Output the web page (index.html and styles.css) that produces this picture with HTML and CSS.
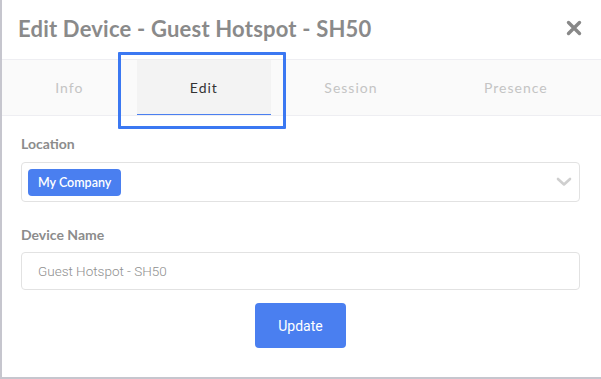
FILE: index.html
```html
<!DOCTYPE html>
<html lang="en">
<head>
    <meta charset="UTF-8">
    <meta name="viewport" content="width=device-width, initial-scale=1.0">
    <title>Edit Device</title>
    <link rel="stylesheet" href="styles.css">
</head>
<body>
    <div class="modal">
        <div class="modalHeader">
            <h2 class="modalTitle">Edit Device - Guest Hotspot - SH50</h2>
            <button class="closeBtn" aria-label="Close">
                <svg width="16" height="16" viewBox="0 0 16 16">
                    <path d="M2.5 2.5 L13.5 13.5 M13.5 2.5 L2.5 13.5" stroke="#888" stroke-width="3.4" stroke-linecap="round"/>
                </svg>
            </button>
        </div>

        <div class="tabs">
            <div class="tab">Info</div>
            <div class="tab active">Edit</div>
            <div class="tab">Session</div>
            <div class="tab">Presence</div>
            <div class="highlight"></div>
        </div>

        <div class="modalBody">
            <label class="fieldLabel">Location</label>
            <div class="select">
                <span class="chip">My Company</span>
                <svg class="chevron" width="16" height="10" viewBox="0 0 16 10">
                    <path d="M2 2 L8 7.5 L14 2" fill="none" stroke="#cfcfcf" stroke-width="2.6" stroke-linecap="round" stroke-linejoin="round"/>
                </svg>
            </div>

            <label class="fieldLabel second">Device Name</label>
            <input class="textInput" type="text" value="Guest Hotspot - SH50">

            <div class="actions">
                <button class="updateBtn">Update</button>
            </div>
        </div>
    </div>
</body>
</html>
```

FILE: styles.css
```css
body {
    margin: 0;
    background: #fff;
    font-family: Lato, "Noto Sans", sans-serif;
}

.modal {
    width: 599px;
    height: 377px;
    border-left: 2px solid #c6c6ce;
    border-bottom: 2px solid #c6c6ce;
    background: #fff;
}

.modalHeader {
    height: 59px;
    padding: 0 19px 0 16px;
    display: flex;
    align-items: center;
    justify-content: space-between;
}

.modalTitle {
    margin: 0;
    font-size: 22px;
    font-weight: 700;
    letter-spacing: 0.2px;
    color: #8a8a8a;
    padding-bottom: 2px;
}

.closeBtn {
    border: none;
    background: none;
    padding: 0;
    width: 16px;
    height: 16px;
    cursor: pointer;
    margin-top: -3px;
}

.closeBtn svg {
    display: block;
}

.tabs {
    position: relative;
    display: flex;
    height: 55px;
    border-top: 1px solid #eeeef2;
    border-bottom: 1px solid #eeeef2;
    background: #fafafa;
}

.tab {
    flex: 1 1 auto;
    display: flex;
    align-items: center;
    justify-content: center;
    font-size: 14px;
    letter-spacing: 1px;
    color: #c4c4c4;
}

.tab.active {
    background: #f3f3f3;
    color: #333;
    border-bottom: 1px solid #4a7ff0;
}

.highlight {
    position: absolute;
    left: 116px;
    top: -8px;
    width: 162px;
    height: 71px;
    border: 3px solid #3b78f2;
    border-radius: 1px;
}

.modalBody {
    padding: 19px 21px 0 19px;
}

.fieldLabel {
    display: block;
    font-size: 14px;
    font-weight: 700;
    color: #8c8c8c;
    line-height: 18px;
    margin-bottom: 9px;
}

.fieldLabel.second {
    margin-top: 24px;
    margin-bottom: 8px;
}

.select {
    height: 38px;
    border: 1px solid #e2e2e2;
    border-radius: 4px;
    display: flex;
    align-items: center;
    justify-content: space-between;
    padding: 0 7px 0 6px;
}

.chip {
    background: #4a7ff0;
    color: #fff;
    font-size: 12.5px;
    font-weight: 600;
    height: 27px;
    line-height: 27px;
    padding: 0 10px;
    border-radius: 4px;
}

.chevron {
    display: block;
}

.textInput {
    box-sizing: border-box;
    width: 100%;
    height: 38px;
    border: 1px solid #e2e2e2;
    border-radius: 4px;
    padding: 0 16px;
    font-family: Roboto, sans-serif;
    font-weight: 300;
    font-size: 13.5px;
    color: #8f8f8f;
    outline: none;
}

.actions {
    display: flex;
    justify-content: center;
    margin-top: 13px;
}

.updateBtn {
    width: 91px;
    height: 45px;
    border: none;
    border-radius: 4px;
    background: #4a7ff0;
    color: #fff;
    font-family: Roboto, sans-serif;
    font-size: 14px;
    cursor: pointer;
}
```
